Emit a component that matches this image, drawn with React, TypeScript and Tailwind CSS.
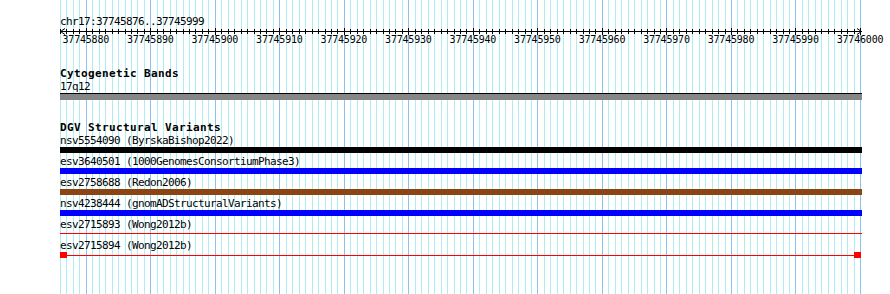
import React from "react";

const START = 37745876;
const END = 37746000;
const PX = 800 / (END - START);

const bpX = (bp: number) => (bp - START) * PX;

type Feature = {
  label: string;
  kind: "bar" | "line" | "capped";
  color: string;
};

const features: Feature[] = [
  { label: "nsv5554090 (ByrskaBishop2022)", kind: "bar", color: "bg-black" },
  { label: "esv3640501 (1000GenomesConsortiumPhase3)", kind: "bar", color: "bg-[#0000ff]" },
  { label: "esv2758688 (Redon2006)", kind: "bar", color: "bg-[#8b4513]" },
  { label: "nsv4238444 (gnomADStructuralVariants)", kind: "bar", color: "bg-[#0000ff]" },
  { label: "esv2715893 (Wong2012b)", kind: "line", color: "bg-[#ff0000]" },
  { label: "esv2715894 (Wong2012b)", kind: "capped", color: "bg-[#ff0000]" },
];

const GridLines = () => {
  const lines = [];
  for (let bp = START; bp <= END; bp++) {
    const x = Math.round(60 + bpX(bp)) + 0.5;
    lines.push(
      <line
        key={bp}
        x1={x}
        x2={x}
        y1={0}
        y2={294}
        stroke={bp % 10 === 0 ? "#8cc2ee" : "#aeeef2"}
        strokeWidth={1}
      />
    );
  }
  return (
    <svg className="absolute inset-0" width={890} height={294} shapeRendering="crispEdges">
      {lines}
    </svg>
  );
};

const Ruler = () => {
  const ticks = [];
  const labels = [];
  for (let bp = START; bp <= END; bp++) {
    const x = Math.round(bpX(bp)) + 0.5;
    const major = bp % 10 === 0;
    ticks.push(<line key={bp} x1={x} x2={x} y1={major ? 0 : 1} y2={major ? 7 : 6} stroke="#000" />);
    if (major) {
      labels.push(
        <span
          key={bp}
          className="absolute top-[6px] -translate-x-1/2 text-[10px] leading-[12px] tracking-[-0.2px] whitespace-nowrap"
          style={{ left: bpX(bp) }}
        >
          {bp}
        </span>
      );
    }
  }
  return (
    <div className="relative h-[20px]">
      <svg className="absolute left-0 top-0" width={806} height={8} shapeRendering="crispEdges">
        <line x1={0} x2={802} y1={3.5} y2={3.5} stroke="#000" />
        {ticks}
        <polyline points="5,0.5 0.5,3.5 5,6.5" fill="none" stroke="#000" shapeRendering="auto" />
        <polyline points="797,0.5 801.5,3.5 797,6.5" fill="none" stroke="#000" shapeRendering="auto" />
      </svg>
      {labels}
    </div>
  );
};

const FeatureRow = ({ f }: { f: Feature }) => (
  <div className="mb-[2px]">
    <div className="h-[13px] leading-[13px] whitespace-nowrap">{f.label}</div>
    {f.kind === "bar" && <div className={`h-[6px] w-[802px] ${f.color}`} />}
    {f.kind === "line" && (
      <div className="h-[6px] w-[802px] pt-[2px]">
        <div className={`h-px ${f.color}`} />
      </div>
    )}
    {f.kind === "capped" && (
      <div className="flex h-[6px] w-[801px] items-center">
        <div className={`h-[6px] w-[7px] ${f.color}`} />
        <div className={`h-px flex-1 ${f.color}`} />
        <div className={`h-[6px] w-[7px] ${f.color}`} />
      </div>
    )}
  </div>
);

export default function App() {
  return (
    <div className="relative h-[294px] w-[890px] overflow-hidden bg-white font-['DejaVu_Sans_Mono',monospace] text-[11px] tracking-[-0.62px] text-black">
      <GridLines />
      <div className="relative pl-[60px] pt-[15px]">
        <div className="h-[13px] leading-[13px]">chr17:37745876..37745999</div>
        <Ruler />

        <div className="mt-[19px] h-[13px] font-bold leading-[13px] tracking-[0.38px]">Cytogenetic Bands</div>
        <div className="h-[13px] leading-[13px]">17q12</div>
        <div className="h-[7px] w-[802px] border-t border-black bg-[#868686]" />

        <div className="mt-[22px] h-[12px] font-bold leading-[12px] tracking-[0.38px]">DGV Structural Variants</div>
        {features.map((f) => (
          <FeatureRow key={f.label} f={f} />
        ))}
      </div>
    </div>
  );
}
